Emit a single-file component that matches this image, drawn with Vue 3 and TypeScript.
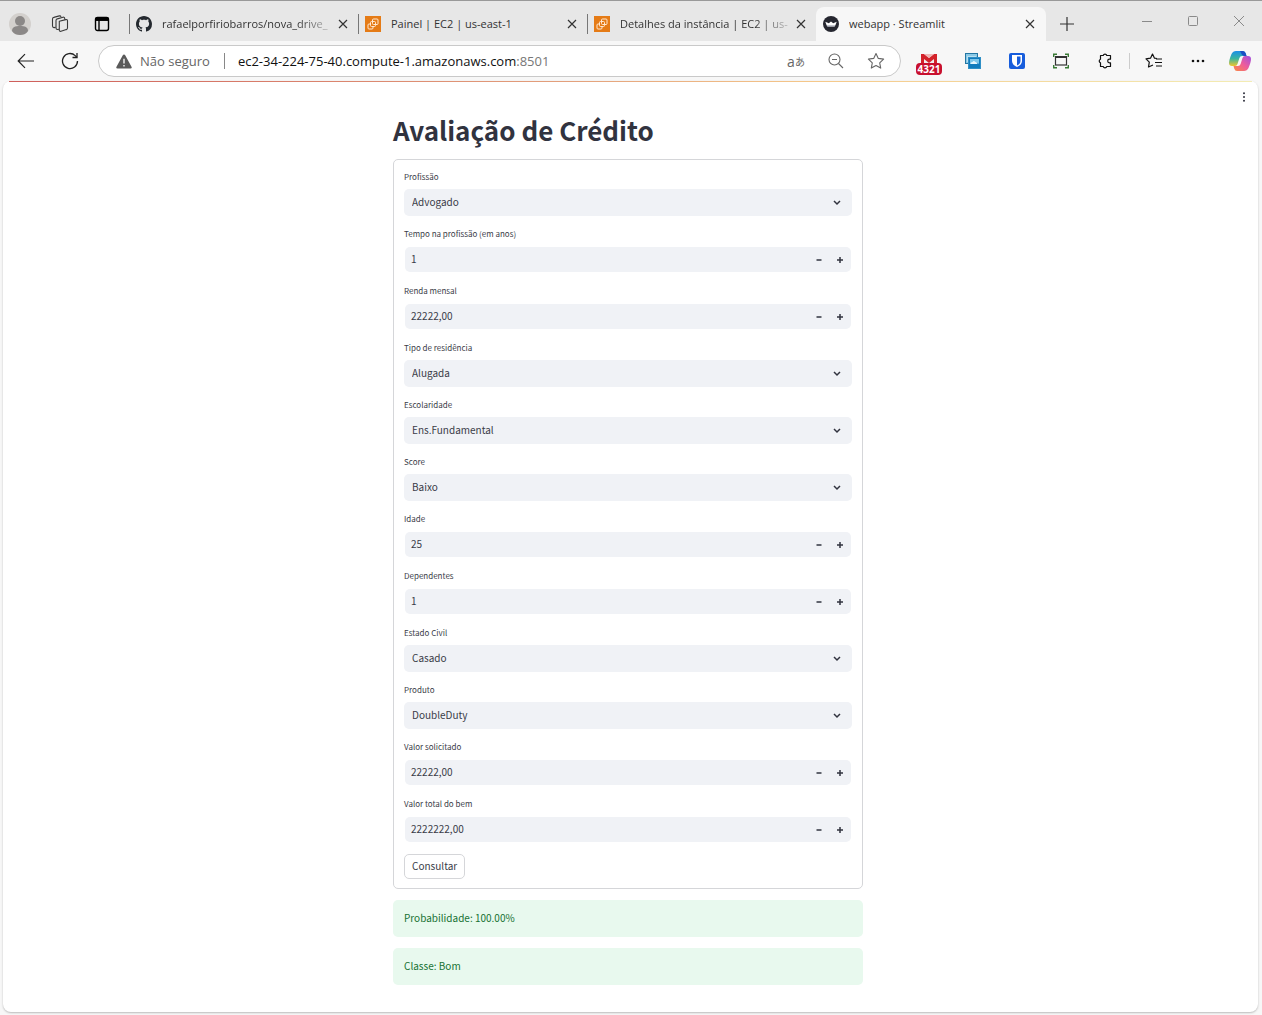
<script setup lang="ts">
import { ref } from 'vue'

interface Tab {
  title: string
  icon: 'github' | 'ec2' | 'streamlit'
  active?: boolean
  faded?: boolean
}

interface Field {
  id: string
  label: string
  kind: 'select' | 'number'
  value: string
}

const tabs: Tab[] = [
  { title: 'rafaelporfiriobarros/nova_drive_', icon: 'github', faded: true },
  { title: 'Painel | EC2 | us-east-1', icon: 'ec2' },
  { title: 'Detalhes da instância | EC2 | us-', icon: 'ec2', faded: true },
  { title: 'webapp · Streamlit', icon: 'streamlit', active: true },
]

const fields = ref<Field[]>([
  { id: 'profissao', label: 'Profissão', kind: 'select', value: 'Advogado' },
  { id: 'tempo', label: 'Tempo na profissão (em anos)', kind: 'number', value: '1' },
  { id: 'renda', label: 'Renda mensal', kind: 'number', value: '22222,00' },
  { id: 'residencia', label: 'Tipo de residência', kind: 'select', value: 'Alugada' },
  { id: 'escolaridade', label: 'Escolaridade', kind: 'select', value: 'Ens.Fundamental' },
  { id: 'score', label: 'Score', kind: 'select', value: 'Baixo' },
  { id: 'idade', label: 'Idade', kind: 'number', value: '25' },
  { id: 'dependentes', label: 'Dependentes', kind: 'number', value: '1' },
  { id: 'estado', label: 'Estado Civil', kind: 'select', value: 'Casado' },
  { id: 'produto', label: 'Produto', kind: 'select', value: 'DoubleDuty' },
  { id: 'solicitado', label: 'Valor solicitado', kind: 'number', value: '22222,00' },
  { id: 'total', label: 'Valor total do bem', kind: 'number', value: '2222222,00' },
])

const results = ['Probabilidade: 100.00%', 'Classe: Bom']

function step(field: Field, delta: number) {
  const decimal = field.value.includes(',')
  const next = Math.max(0, parseFloat(field.value.replace(',', '.')) + delta)
  field.value = decimal ? next.toFixed(2).replace('.', ',') : String(next)
}
</script>

<template>
  <div class="browser">
    <header class="tabbar">
      <div class="tab-tools">
        <button class="icon-btn" aria-label="Perfil">
          <svg width="24" height="24" viewBox="0 0 24 24">
            <circle cx="12" cy="12" r="11" fill="#d3d0cd" />
            <circle cx="12" cy="9" r="5" fill="#8b8887" />
            <path d="M4 19c0-4 3-5 8-5s8 1 8 5c-2 3-5 4-8 4s-6-1-8-4z" fill="#8b8887" />
          </svg>
        </button>
        <button class="icon-btn" aria-label="Espaços de trabalho">
          <svg width="18" height="18" viewBox="0 0 18 18" fill="none" stroke="#3a3a3a" stroke-width="1.1" stroke-linejoin="round">
            <path d="M8.300 6.200 14.800 4.600q1.700-.3 1.700 1.300v7.200q0 1.200-1.200 1.500l-5.300 1.700q-1.700.4-1.700-1.400z" />
            <path d="M8 14.200 6.500 14.500Q5 14.500 5 13V5.500Q5 4.200 6.300 3.900L12 2.200q1.500-.3 1.700 1.300v1" />
            <path d="M4.600 12.400 3 12.600Q1.500 12.500 1.500 11V4Q1.500 2.700 2.800 2.400L8.300.9q1.300-.3 1.800 1" />
          </svg>
        </button>
        <button class="icon-btn" aria-label="Guias verticais">
          <svg width="16" height="16" viewBox="0 0 16 16" fill="none" stroke="#000" stroke-width="1.400">
            <rect x="1.500" y="1.500" width="13" height="13" rx="2" />
            <path d="M1.500 3.200h13" stroke-width="3.500" />
            <path d="M5 4v10.500" />
          </svg>
        </button>
      </div>

      <nav class="tabs" aria-label="Guias">
        <div v-for="tab in tabs" :key="tab.title" class="tab" :class="{ active: tab.active }">
          <svg v-if="tab.icon === 'github'" class="favicon" viewBox="0 0 16 16" fill="#24292f">
            <path d="M8 0C3.580 0 0 3.580 0 8c0 3.540 2.290 6.530 5.470 7.590.4.070.55-.17.55-.38 0-.19-.01-.82-.01-1.490-2.010.37-2.530-.49-2.690-.94-.09-.23-.48-.94-.82-1.130-.28-.15-.68-.52-.01-.53.63-.01 1.080.58 1.230.82.72 1.210 1.870.87 2.330.66.07-.52.28-.87.51-1.070-1.780-.2-3.640-.89-3.640-3.950 0-.87.31-1.590.82-2.150-.08-.2-.36-1.020.08-2.120 0 0 .67-.21 2.200.82.64-.18 1.320-.27 2-.27s1.360.09 2 .27c1.530-1.040 2.200-.82 2.200-.82.44 1.100.16 1.920.08 2.120.51.56.82 1.270.82 2.150 0 3.070-1.870 3.750-3.650 3.950.29.25.54.73.54 1.480 0 1.070-.01 1.930-.01 2.200 0 .21.15.46.55.38A8.010 8.010 0 0 0 16 8c0-4.420-3.580-8-8-8z" />
          </svg>
          <svg v-else-if="tab.icon === 'ec2'" class="favicon" viewBox="0 0 16 16" fill="none" stroke="#ffe9d2">
            <rect width="16" height="16" fill="#e57b16" stroke="none" />
            <rect x="7.500" y="3" width="5.500" height="5.500" rx="1" />
            <rect x="5.500" y="5.500" width="5" height="5" rx="1" />
            <path d="M5 8H4a1 1 0 0 0-1 1v3a1 1 0 0 0 1 1h3a1 1 0 0 0 1-1v-1" />
          </svg>
          <svg v-else class="favicon" viewBox="0 0 16 16">
            <circle cx="8" cy="8" r="8" fill="#262730" />
            <path d="M2.300 5.700 5.800 7.300 8 5.400l2.200 1.900 3.500-1.600-1.200 3.300H3.500z" fill="#fff" />
            <path d="M3.500 9h9q-.4 1.800-1.200 1.800H4.700Q3.900 10.800 3.500 9z" fill="#c5c8d0" />
          </svg>
          <a class="tab-title" :class="{ faded: tab.faded }" href="#">{{ tab.title }}</a>
          <button class="icon-btn tab-close" aria-label="Fechar guia">
            <svg width="10" height="10" viewBox="0 0 10 10" stroke="#333" stroke-width="1.200">
              <path d="M1 1l8 8M9 1l-8 8" />
            </svg>
          </button>
        </div>
      </nav>

      <button class="icon-btn new-tab" aria-label="Nova guia">
        <svg width="14" height="14" viewBox="0 0 14 14" stroke="#333" stroke-width="1.200">
          <path d="M7 0v14M0 7h14" />
        </svg>
      </button>

      <div class="window-controls">
        <button class="icon-btn" aria-label="Minimizar">
          <svg width="12" height="12" viewBox="0 0 12 12" stroke="#8a8a8a"><path d="M1 6.500h10" /></svg>
        </button>
        <button class="icon-btn" aria-label="Maximizar">
          <svg width="12" height="12" viewBox="0 0 12 12" fill="none" stroke="#8a8a8a"><rect x="1.500" y="1.500" width="9" height="9" rx="1" /></svg>
        </button>
        <button class="icon-btn" aria-label="Fechar">
          <svg width="12" height="12" viewBox="0 0 12 12" stroke="#8a8a8a"><path d="M1 1l10 10M11 1L1 11" /></svg>
        </button>
      </div>
    </header>

    <div class="toolbar">
      <div class="nav-tools">
        <button class="icon-btn" aria-label="Voltar">
          <svg width="18" height="16" viewBox="0 0 18 16" fill="none" stroke="#222" stroke-width="1.200">
            <path d="M17 8H1.500M8 1.200 1.200 8 8 14.800" />
          </svg>
        </button>
        <button class="icon-btn" aria-label="Atualizar">
          <svg width="18" height="18" viewBox="0 0 18 18" fill="none" stroke="#222" stroke-width="1.300">
            <path d="M16.500 9a7.500 7.500 0 1 1-2.300-5.400L16 5.500" />
            <path d="M16 1v4.500h-4.500" />
          </svg>
        </button>
      </div>

      <div class="address">
        <button class="security">
          <svg width="16" height="15" viewBox="0 0 16 15">
            <path d="M8 .5q.8 0 1.200.8l6.300 11.500q.8 1.700-1 1.700h-13q-1.800 0-1-1.700L6.800 1.300Q7.200.5 8 .5z" fill="#5a5a5a" />
            <path d="M8 4.800v4.700M8 11v1.500" stroke="#fff" stroke-width="1.300" />
          </svg>
          <span>Não seguro</span>
        </button>
        <span class="divider"></span>
        <div class="url" role="textbox" contenteditable="true" spellcheck="false" aria-label="Endereço">ec2-34-224-75-40.compute-1.amazonaws.com<span class="port">:8501</span></div>
        <button class="icon-btn translate" aria-label="Traduzir">a<span class="kana">あ</span></button>
        <button class="icon-btn" aria-label="Zoom">
          <svg width="16" height="16" viewBox="0 0 16 16" fill="none" stroke="#666" stroke-width="1.100">
            <circle cx="6.500" cy="6.500" r="5.500" />
            <path d="M10.500 10.500 15 15M4 6.500h5" />
          </svg>
        </button>
        <button class="icon-btn" aria-label="Favoritar">
          <svg width="18" height="18" viewBox="0 0 18 18" fill="none" stroke="#666" stroke-width="1.100" stroke-linejoin="round">
            <path d="M9 1.500l2.300 4.900 5.300.7-3.900 3.700 1 5.300L9 13.500l-4.700 2.600 1-5.300L1.400 7.100l5.300-.7z" />
          </svg>
        </button>
      </div>

      <div class="extensions">
        <button class="icon-btn gmail" aria-label="Gmail, 4321 mensagens">
          <svg width="16" height="12" viewBox="0 0 16 12">
            <rect width="16" height="12" fill="#eee" />
            <path d="M0 0h3l5 4 5-4h3v12h-3V5L8 9 3 5v7H0z" fill="#d3222a" />
            <path d="M3 0h10L8 4z" fill="#f0b5b5" />
          </svg>
          <span class="badge">4321</span>
        </button>
        <button class="icon-btn" aria-label="Imagens">
          <svg width="16" height="16" viewBox="0 0 16 16">
            <rect x=".5" y=".5" width="12" height="10" fill="#8ac9e6" stroke="#2476a3" />
            <path d="M2 3h9v6H2z" fill="#b9dff0" />
            <rect x="3.500" y="4.500" width="12" height="11" fill="#117bbd" stroke="#2f8fc6" />
            <path d="M5 6h9v5l-3-2-2 2H5z" fill="#7cc6ea" />
            <path d="M5.500 11q0-2 2-2 1-2 3 0 2 0 2 2z" fill="#e6f5fc" />
          </svg>
        </button>
        <button class="icon-btn" aria-label="Bitwarden">
          <svg width="16" height="16" viewBox="0 0 16 16">
            <rect width="16" height="16" rx="2" fill="#175ddc" />
            <path d="M3 2h10v6c0 3-2.500 5-5 6-2.500-1-5-3-5-6z" fill="#fff" />
            <path d="M8 3.500h3.500V8c0 2-1.500 3.500-3.500 4.500z" fill="#175ddc" />
          </svg>
        </button>
        <button class="icon-btn" aria-label="Captura de tela">
          <svg width="16" height="16" viewBox="0 0 16 16" fill="none">
            <path d="M.7 4V1.200H4M12 1.200h3.300V4M.7 12v2.800H4M12 14.800h3.300V12" stroke="#397a35" stroke-width="1.400" />
            <rect x="2.500" y="4" width="11" height="8" stroke="#333" stroke-width="1.200" />
            <path d="M2 4h12" stroke="#333" stroke-width="2" />
          </svg>
        </button>
        <button class="icon-btn" aria-label="Extensões">
          <svg width="16" height="16" viewBox="0 0 16 16" fill="none" stroke="#111" stroke-width="1.200" stroke-linejoin="round">
            <path d="M3.500 2.500h2.700a1.900 1.900 0 0 1 3.600 0h3.700v3.700h-1a1.800 1.800 0 0 0 0 3.600h1v3.700H9.800a1.900 1.900 0 0 1-3.600 0H3.500V9.800a1.900 1.900 0 0 1 0-3.600z" />
          </svg>
        </button>
        <span class="ext-divider"></span>
        <button class="icon-btn" aria-label="Favoritos">
          <svg width="18" height="16" viewBox="0 0 18 16" fill="none" stroke="#111" stroke-width="1.200" stroke-linejoin="round">
            <path d="M12 5.500 9.500 5.200 7.500 1 5.500 5.200 1 5.900l3.300 3.200-.8 4.900L8 12" />
            <path d="M11 6h6M10 9.500h7M11 13h6" />
          </svg>
        </button>
        <button class="icon-btn" aria-label="Mais">
          <svg width="14" height="4" viewBox="0 0 14 4" fill="#111">
            <circle cx="2" cy="2" r="1.300" /><circle cx="7" cy="2" r="1.300" /><circle cx="12" cy="2" r="1.300" />
          </svg>
        </button>
        <button class="icon-btn" aria-label="Copilot">
          <svg width="22" height="22" viewBox="0 0 22 22">
            <defs>
              <linearGradient id="cool" x1="0" y1="0" x2="0" y2="1">
                <stop offset="0" stop-color="#1a8fe8" /><stop offset=".5" stop-color="#38b5a0" /><stop offset="1" stop-color="#f0c52c" />
              </linearGradient>
              <linearGradient id="warm" x1="1" y1="0" x2="0" y2="1">
                <stop offset="0" stop-color="#a04fe0" /><stop offset=".5" stop-color="#ee5d9a" /><stop offset="1" stop-color="#fa8a42" />
              </linearGradient>
            </defs>
            <path d="M7 1h7q2 0 2.800 2.500L17.500 6H13q-2 0-2.600 2L8.500 14q-.6 2-2.500 2H3q-3 0-3-3 0-3 2.500-9Q4 1 7 1z" fill="url(#cool)" />
            <path d="M15 21H8q-2 0-2.800-2.500L4.500 16H9q2 0 2.600-2l1.900-6q.6-2 2.500-2h3q3 0 3 3 0 3-2.500 9Q18 21 15 21z" fill="url(#warm)" />
            <path d="M11 1h3q2 0 2.800 2.500L17.500 6H15q-2 0-3-3z" fill="#1b4fc4" />
          </svg>
        </button>
      </div>
    </div>

    <main class="page">
      <div class="accent"></div>
      <div class="page-top">
        <button class="icon-btn" aria-label="Menu">
          <svg width="4" height="10" viewBox="0 0 4 10" fill="#31333f">
            <circle cx="2" cy="1.200" r="1" /><circle cx="2" cy="5" r="1" /><circle cx="2" cy="8.800" r="1" />
          </svg>
        </button>
      </div>

      <div class="content">
        <h1>Avaliação de Crédito</h1>

        <form class="card" @submit.prevent>
          <div v-for="field in fields" :key="field.id" class="field">
            <label :for="field.id">{{ field.label }}</label>
            <div v-if="field.kind === 'select'" class="control select-control">
              <select :id="field.id" v-model="field.value">
                <option :value="field.value">{{ field.value }}</option>
              </select>
              <svg class="chevron" width="8" height="6" viewBox="0 0 8 6" fill="none" stroke="#31333f" stroke-width="1.500">
                <path d="M1 1l3 3 3-3" />
              </svg>
            </div>
            <div v-else class="control number-control">
              <input :id="field.id" v-model="field.value" type="text" inputmode="decimal" />
              <button type="button" class="step" aria-label="Diminuir" @click="step(field, -1)">
                <svg width="6" height="6" viewBox="0 0 6 6" stroke="#31333f" stroke-width="1.500"><path d="M.5 3h5" /></svg>
              </button>
              <button type="button" class="step" aria-label="Aumentar" @click="step(field, 1)">
                <svg width="6" height="6" viewBox="0 0 6 6" stroke="#31333f" stroke-width="1.500"><path d="M0 3h6M3 0v6" /></svg>
              </button>
            </div>
          </div>
          <button type="submit" class="submit">Consultar</button>
        </form>

        <p v-for="line in results" :key="line" class="alert">{{ line }}</p>
      </div>
    </main>
  </div>
</template>

<style>
body {
  background: #f7f7f7;
}
</style>

<style scoped>
* {
  box-sizing: border-box;
}

.browser {
  display: flex;
  flex-direction: column;
  min-height: 100vh;
  font-family: "Open Sans", "Noto Sans", "Noto Sans CJK JP", sans-serif;
  color: #333;
}

button {
  border: 0;
  padding: 0;
  background: none;
  color: inherit;
  font: inherit;
}

.icon-btn {
  display: flex;
  align-items: center;
  justify-content: center;
  flex: none;
}

/* Tab strip */
.tabbar {
  display: flex;
  height: 41px;
  background: #e7e7e7;
  border-top: 1px solid #999;
}

.tab-tools {
  display: flex;
  align-items: center;
  padding: 6px 5px 0 0;
}

.tab-tools .icon-btn {
  width: 40px;
}

.tab-tools .icon-btn:last-child {
  width: 44px;
}

.tabs {
  display: flex;
  flex: 0 1 917px;
  min-width: 0;
  padding-top: 6px;
}

.tab {
  display: flex;
  align-items: center;
  flex: 0 1 229px;
  min-width: 0;
  padding: 0 10px 0 7px;
  background: linear-gradient(#777, #777) no-repeat left center / 1px 20px;
}

.tab.active {
  flex: 0 1 230px;
  padding-right: 11px;
  background: #f7f7f7;
  border-radius: 8px 8px 0 0;
}

.favicon {
  width: 16px;
  height: 16px;
  flex: none;
  margin-right: 10px;
}

.tab-title {
  flex: 1;
  min-width: 0;
  overflow: hidden;
  white-space: nowrap;
  color: #333;
  font-size: 11px;
  line-height: 18px;
  text-decoration: none;
}

.faded {
  mask-image: linear-gradient(to right, #000 calc(100% - 36px), rgba(0, 0, 0, 0.2));
}

.tab-close {
  width: 10px;
  margin-left: 6px;
}

.new-tab {
  width: 42px;
  padding-top: 5px;
}

.window-controls {
  display: flex;
  align-items: center;
  margin-left: auto;
}

.window-controls .icon-btn {
  width: 46px;
}

/* Toolbar */
.toolbar {
  display: flex;
  align-items: center;
  height: 40px;
  background: #f7f7f7;
}

.nav-tools {
  display: flex;
  padding: 0 6px 0 4px;
}

.nav-tools .icon-btn {
  width: 44px;
}

.address {
  display: flex;
  align-items: center;
  flex: 1;
  min-width: 0;
  height: 32px;
  padding: 0 4px 0 17px;
  border: 1px solid #c9c9c9;
  border-radius: 16px;
  background: #fff;
  font-size: 13px;
}

.address .icon-btn {
  width: 40px;
}

.security {
  display: flex;
  align-items: center;
  gap: 8px;
  flex: none;
  color: #666;
}

.divider {
  flex: none;
  width: 1px;
  height: 16px;
  margin: 0 13px 0 14px;
  background: #888;
}

.url {
  flex: 1;
  min-width: 0;
  overflow: hidden;
  white-space: nowrap;
  color: #111;
}

.port {
  color: #777;
}

.translate {
  color: #666;
  font-size: 14px;
}

.kana {
  font-family: "Noto Sans CJK JP", sans-serif;
  font-size: 10px;
}

.extensions {
  display: flex;
  align-items: center;
  padding: 0 2px 0 6px;
}

.extensions .icon-btn {
  width: 44px;
}

.gmail {
  flex-direction: column;
  padding-top: 6px;
}

.badge {
  margin-top: -3px;
  padding: 0 2px;
  border-radius: 4px;
  background: #c8102e;
  color: #fff;
  font-size: 10px;
  font-weight: 700;
  line-height: 12px;
}

.ext-divider {
  width: 1px;
  height: 16px;
  margin: 0 2px;
  background: #ccc;
}

.extensions .icon-btn:last-child {
  width: 40px;
}

/* Page */
.page {
  display: flex;
  flex: 1;
  flex-direction: column;
  margin: 0 4px 3px 3px;
  border-radius: 8px;
  background: #fff;
  box-shadow: 0 1px 2px #bbb;
  font-family: "Noto Sans CJK SC", sans-serif;
  color: #3a3c48;
}

.accent {
  height: 1px;
  margin: 0 6px;
  background: linear-gradient(to right, #cf5f5b, #e3a07c 45%, #f5c88a 65%, #f3ecb4);
}

.page-top {
  display: flex;
  justify-content: flex-end;
  padding: 10px 12px 0 0;
}

.content {
  width: calc(100% - 40px);
  max-width: 475px;
  margin: 0 auto;
  padding: 8px 5px 26px 0;
}

h1 {
  margin: 0 0 9px;
  color: #31333f;
  font-size: 26px;
  font-weight: 700;
  line-height: 40px;
}

.card {
  display: flex;
  flex-direction: column;
  gap: 11px;
  padding: 10px 10px 9px;
  border: 1px solid #d5d6d9;
  border-radius: 5px;
}

.field {
  display: flex;
  flex-direction: column;
  gap: 5px;
}

label {
  font-size: 8px;
  line-height: 14px;
}

.control {
  display: flex;
  align-items: center;
  height: 27px;
  border-radius: 5px;
  background: #f0f2f6;
}

.select-control {
  display: grid;
}

.select-control > * {
  grid-area: 1 / 1;
}

select,
input {
  min-width: 0;
  height: 25px;
  border: 0;
  outline: 0;
  background: none;
  appearance: none;
  color: inherit;
  font-family: inherit;
  font-size: 10px;
}

select {
  width: 100%;
  padding: 0 24px 2px 8px;
}

.chevron {
  justify-self: end;
  margin-right: 11px;
  pointer-events: none;
}

.number-control {
  height: 25px;
  margin: 1px;
  padding-right: 1px;
}

input {
  flex: 1;
  padding: 0 6px 2px;
}

.step {
  display: flex;
  align-items: center;
  justify-content: center;
  width: 21px;
  height: 25px;
}

.submit {
  align-self: flex-start;
  height: 25px;
  padding: 0 7px 2px;
  border: 1px solid #d5d6d9;
  border-radius: 5px;
  background: #fff;
  font-size: 10px;
}

.alert {
  margin: 11px 0 0;
  padding: 9px 11px 11px;
  border-radius: 5px;
  background: #e8f9ee;
  color: #177233;
  font-size: 10px;
  line-height: 17px;
}
</style>
